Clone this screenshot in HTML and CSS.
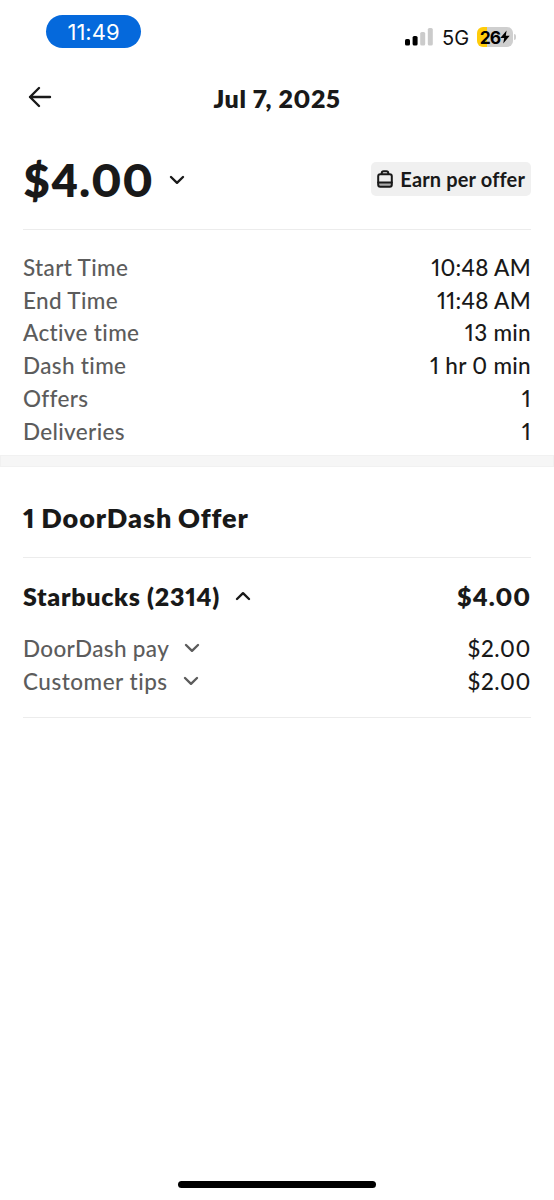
FILE: index.html
```
<!DOCTYPE html>
<html lang="en">
<head>
    <meta charset="UTF-8">
    <meta name="viewport" content="width=device-width, initial-scale=1.0">
    <title>Dash Summary</title>
    <link rel="stylesheet" href="styles.css">
</head>
<body>
    <div class="phone">
        <div class="status-bar">
            <div class="time-pill">11:49</div>
            <div class="status-right">
                <svg class="signal" width="28" height="18" viewBox="0 0 28 18">
                    <rect x="0" y="11" width="5" height="6.5" rx="1.6" fill="#000"/>
                    <rect x="7.6" y="8" width="5" height="9.5" rx="1.6" fill="#000"/>
                    <rect x="15.2" y="4" width="5" height="13.5" rx="1.6" fill="#cbcbcb"/>
                    <rect x="22.8" y="0" width="5" height="17.5" rx="1.6" fill="#cbcbcb"/>
                </svg>
                <span class="network">5G</span>
                <div class="battery">
                    <span>26</span>
                    <svg width="10" height="14" viewBox="0 0 10 14">
                        <path d="M6.6 0.5 L0.3 8 H4.2 L3.2 13.5 L9.7 5.8 H5.8 Z" fill="#000"/>
                    </svg>
                </div>
                <div class="battery-tip"></div>
            </div>
        </div>

        <div class="header">
            <svg class="back" width="24" height="22" viewBox="0 0 24 22">
                <path d="M11 2 L2 11 L11 20 M2 11 H22" />
            </svg>
            <div class="title">Jul 7, 2025</div>
        </div>

        <div class="summary">
            <div class="total">$4.00</div>
            <svg class="chevron" width="16" height="10" viewBox="0 0 16 10">
                <path d="M2 2 L8 7.8 L14 2" />
            </svg>
            <div class="badge">
                <svg width="16" height="18" viewBox="0 0 16 18">
                    <path d="M1.2 12 H14.8 V14.5 Q14.8 16.8 12.5 16.8 H3.5 Q1.2 16.8 1.2 14.5 Z" fill="#aaa" stroke="none"/>
                    <rect x="1.2" y="4.2" width="13.6" height="12.6" rx="2" />
                    <path d="M4.7 4 V3.2 Q4.7 1.2 6.7 1.2 H9.3 Q11.3 1.2 11.3 3.2 V4 M1.2 12.4 H14.8" />
                </svg>
                <span>Earn per offer</span>
            </div>
        </div>

        <div class="stats">
            <div class="row"><span class="label">Start Time</span><span class="value">10:48 AM</span></div>
            <div class="row"><span class="label">End Time</span><span class="value">11:48 AM</span></div>
            <div class="row"><span class="label">Active time</span><span class="value">13 min</span></div>
            <div class="row"><span class="label">Dash time</span><span class="value">1 hr 0 min</span></div>
            <div class="row"><span class="label">Offers</span><span class="value">1</span></div>
            <div class="row"><span class="label">Deliveries</span><span class="value">1</span></div>
        </div>

        <div class="band"></div>

        <div class="offers-title"><span>1 DoorDash Offer</span></div>

        <div class="offer">
            <div class="offer-head">
                <span class="store">Starbucks (2314)</span>
                <svg class="chevron" width="16" height="10" viewBox="0 0 16 10">
                    <path d="M2 8 L8 2.2 L14 8" />
                </svg>
                <span class="offer-total">$4.00</span>
            </div>
            <div class="row">
                <span class="label">DoorDash pay</span>
                <svg class="chevron gray" width="16" height="10" viewBox="0 0 16 10">
                    <path d="M2 2 L8 7.8 L14 2" />
                </svg>
                <span class="value money">$2.00</span>
            </div>
            <div class="row">
                <span class="label tips">Customer tips</span>
                <svg class="chevron gray" width="16" height="10" viewBox="0 0 16 10">
                    <path d="M2 2 L8 7.8 L14 2" />
                </svg>
                <span class="value money">$2.00</span>
            </div>
        </div>

        <div class="home-bar"></div>
    </div>
</body>
</html>
```

FILE: styles.css
```
* {
    box-sizing: border-box;
}
body {
    margin: 0;
    background-color: #fff;
    color: #191919;
    font-family: Lato, 'Open Sans', sans-serif;
    font-variant-ligatures: none;
    font-variant-numeric: proportional-nums;
}
.phone {
    width: 554px;
    height: 1200px;
    display: flex;
    flex-direction: column;
    overflow: hidden;
}
svg {
    display: block;
    flex-shrink: 0;
}

/* status bar */
.status-bar {
    height: 64px;
    padding: 15px 38px 0 46px;
    display: flex;
    justify-content: space-between;
    align-items: flex-start;
    font-family: Inter, sans-serif;
}
.time-pill {
    width: 95px;
    height: 33px;
    border-radius: 17px;
    background-color: #0569dc;
    color: #fff;
    font-size: 22px;
    line-height: 34px;
    text-align: center;
}
.status-right {
    display: flex;
    align-items: center;
    height: 44px;
}
.network {
    width: 27px;
    margin: 0 8px 0 9px;
    font-size: 20px;
    line-height: 20px;
    padding-top: 1px;
    color: #111;
}
.battery {
    width: 36px;
    height: 20px;
    border-radius: 6px;
    background: linear-gradient(to right, #ffcc0a 10px, #cfcfcf 10px);
    display: flex;
    align-items: center;
    justify-content: center;
    color: #000;
    font-size: 17.5px;
    font-weight: 700;
    letter-spacing: -0.9px;
}
.battery-tip {
    width: 2px;
    height: 6px;
    margin-left: 1px;
    border-radius: 0 2px 2px 0;
    background-color: #cfcfcf;
}

/* header */
.header {
    height: 70px;
    padding: 0 28px;
    display: grid;
    grid-template-columns: 24px 1fr 24px;
    align-items: center;
}
.back {
    margin-top: -5px;
}
.back path,
.chevron path,
.badge svg {
    fill: none;
    stroke: #191919;
    stroke-width: 2.4;
    stroke-linecap: round;
    stroke-linejoin: round;
}
.title {
    text-align: center;
    font-size: 25px;
    font-weight: 800;
    letter-spacing: 0.6px;
    padding-bottom: 2px;
}
.summary {
    height: 96px;
    margin: 0 23px;
    padding-bottom: 4px;
    border-bottom: 1px solid #ececec;
    display: flex;
    align-items: center;
}
.total {
    font-size: 45px;
    font-weight: 800;
    letter-spacing: 1.1px;
    margin-right: 15px;
}
.badge {
    margin-left: auto;
    width: 160px;
    height: 34px;
    margin-bottom: 1px;
    padding: 0 6px 1px;
    border-radius: 5px;
    background-color: #f0f0f0;
    display: flex;
    align-items: center;
    justify-content: space-between;
    font-size: 20px;
    font-weight: 700;
    letter-spacing: 0.15px;
    white-space: nowrap;
}
.badge svg {
    stroke-width: 2;
}

/* rows */
.stats {
    padding: 21px 23px 0;
    height: 225px;
}
.row {
    display: flex;
    align-items: center;
    height: 32.75px;
    font-size: 22.5px;
    font-weight: 500;
    white-space: nowrap;
}
.label {
    color: #5c5c5c;
    letter-spacing: 0.35px;
}
.label.tips {
    letter-spacing: 0.5px;
}
.value {
    margin-left: auto;
    letter-spacing: 0.3px;
}
.value.money {
    letter-spacing: 0.6px;
}
.band {
    height: 12px;
    background-color: #f6f6f6;
    border: 1px solid #f1f1f1;
}

/* offers */
.offers-title {
    height: 91px;
    margin: 0 23px;
    padding-top: 10px;
    border-bottom: 1px solid #ececec;
    display: flex;
    align-items: center;
    font-size: 27px;
    font-weight: 800;
    letter-spacing: 0.95px;
    word-spacing: -1.5px;
}
.offer {
    height: 160px;
    margin: 0 23px;
    padding-top: 14px;
    border-bottom: 1px solid #ececec;
}
.offer-head {
    display: flex;
    align-items: center;
    height: 47px;
    margin-bottom: 13px;
    font-size: 25px;
    font-weight: 800;
    letter-spacing: 0.7px;
}
.offer-head .chevron,
.row .chevron {
    margin-left: 15px;
}
.chevron.gray path {
    stroke: #5c5c5c;
}
.offer-total {
    margin-left: auto;
    letter-spacing: 0.9px;
}
.home-bar {
    width: 198px;
    height: 7px;
    margin: auto auto 12px;
    border-radius: 4px;
    background-color: #000;
}
```
